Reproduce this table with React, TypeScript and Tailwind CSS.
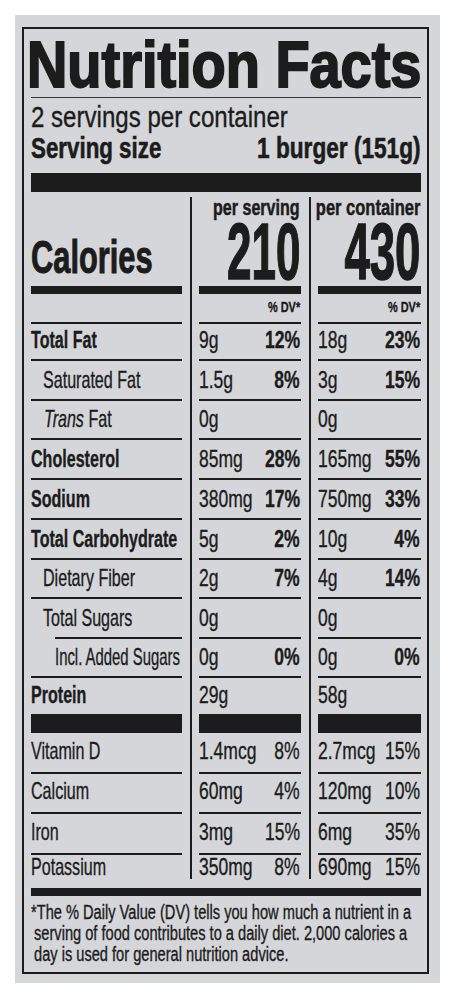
import type { ReactNode } from 'react'

const ink = 'bg-[#1c1c1c]'

// text squeezed sideways to get the condensed look of the label type
function L({ s, children }: { s: string; children: ReactNode }) {
  return <span className={`inline-block origin-left whitespace-nowrap ${s}`}>{children}</span>
}

function R({ s, children }: { s: string; children: ReactNode }) {
  return (
    <div className="ml-auto flex w-0 justify-end pr-[1px]">
      <span className={`inline-block shrink-0 origin-right whitespace-nowrap ${s}`}>{children}</span>
    </div>
  )
}

function Divider() {
  return (
    <div className="w-[17px] shrink-0 pl-[8px]">
      <div className={`h-full w-[2px] ${ink}`} />
    </div>
  )
}

type Nutrient = {
  label: ReactNode
  bold?: boolean
  indent?: string
  squeeze?: string
  h: string
  a: [string, string]
  b: [string, string]
  line?: boolean
}

const main: Nutrient[] = [
  { label: 'Total Fat', bold: true, h: 'h-[37px]', a: ['9g', '12%'], b: ['18g', '23%'] },
  { label: 'Saturated Fat', indent: 'pl-[12px]', h: 'h-[40px]', a: ['1.5g', '8%'], b: ['3g', '15%'] },
  {
    label: (
      <>
        <i>Trans</i> Fat
      </>
    ),
    indent: 'pl-[13px]',
    h: 'h-[39px]',
    a: ['0g', ''],
    b: ['0g', ''],
  },
  { label: 'Cholesterol', bold: true, h: 'h-[40px]', a: ['85mg', '28%'], b: ['165mg', '55%'] },
  { label: 'Sodium', bold: true, h: 'h-[40px]', a: ['380mg', '17%'], b: ['750mg', '33%'] },
  { label: 'Total Carbohydrate', bold: true, h: 'h-[40px]', a: ['5g', '2%'], b: ['10g', '4%'] },
  { label: 'Dietary Fiber', indent: 'pl-[12px]', h: 'h-[39px]', a: ['2g', '7%'], b: ['4g', '14%'] },
]

const minerals: Nutrient[] = [
  { label: 'Vitamin D', h: 'h-[41px]', a: ['1.4mcg', '8%'], b: ['2.7mcg', '15%'] },
  { label: 'Calcium', h: 'h-[40px]', a: ['60mg', '4%'], b: ['120mg', '10%'] },
  { label: 'Iron', h: 'h-[41px]', a: ['3mg', '15%'], b: ['6mg', '35%'] },
  { label: 'Potassium', h: 'h-[24px]', a: ['350mg', '8%'], b: ['690mg', '15%'], line: false },
]

function Amount({ v, boldPct }: { v: [string, string]; boldPct: boolean }) {
  return (
    <>
      <L s="scale-x-[0.73]">{v[0]}</L>
      {v[1] && (
        <div className={boldPct ? 'ml-auto font-bold' : 'ml-auto'}>
          <R s="scale-x-[0.73]">{v[1]}</R>
        </div>
      )}
    </>
  )
}

function Row({ n, pad, boldPct }: { n: Nutrient; pad: string; boldPct: boolean }) {
  const line = n.line === false ? '' : 'border-b-2 border-[#1c1c1c]'
  return (
    <div className={`flex text-[24px] leading-none ${n.h}`}>
      <div className={`flex w-[151px] items-end ${pad} ${line} ${n.indent ?? ''} ${n.bold ? 'font-bold' : ''}`}>
        <L s={n.squeeze ?? 'scale-x-[0.67]'}>{n.label}</L>
      </div>
      <Divider />
      <div className={`flex w-[102px] items-end ${pad} ${line}`}>
        <Amount v={n.a} boldPct={boldPct} />
      </div>
      <Divider />
      <div className={`flex flex-1 items-end ${pad} ${line}`}>
        <Amount v={n.b} boldPct={boldPct} />
      </div>
    </div>
  )
}

export default function App() {
  return (
    <div className="h-[998px] w-[455px] overflow-hidden bg-white pt-[15px] pl-[15px] font-['Liberation_Sans',Arial,sans-serif] text-[#1c1c1c] [-webkit-text-stroke:0.35px_#1c1c1c]">
      <div className="h-[968px] w-[425px] bg-[#d4d6d9] pt-[12px] pl-[7px]">
        <div className="box-border h-[947px] w-[407px] overflow-hidden border-2 border-[#1c1c1c] pr-[6px] pl-[7px]">
          {/* title */}
          <div className="-ml-[4px] pt-[3px] text-[65px] leading-none font-bold [-webkit-text-stroke:2px_#1c1c1c]">
            <L s="scale-x-[0.86]">Nutrition Facts</L>
          </div>
          <div className="h-px bg-[#333]" />

          <div className="mt-[4px] text-[29px] leading-[31px]">
            <L s="scale-x-[0.83]">2 servings per container</L>
          </div>
          <div className="flex text-[29px] leading-[31px] font-bold [-webkit-text-stroke:0.6px_#1c1c1c]">
            <L s="scale-x-[0.77]">Serving size</L>
            <R s="scale-x-[0.78]">1 burger (151g)</R>
          </div>

          <div className={`mt-[9px] h-[19px] ${ink}`} />

          {/* calories */}
          <div className="mt-[5px] flex font-bold">
            <div className="flex w-[151px] flex-col justify-end">
              <div className="text-[46px] leading-none [-webkit-text-stroke:1px_#1c1c1c]">
                <L s="scale-x-[0.67]">Calories</L>
              </div>
              <div className={`mt-[6px] h-[8px] ${ink}`} />
            </div>
            <Divider />
            <div className="flex w-[102px] flex-col">
              <div className="flex text-[22px] leading-[22px] [-webkit-text-stroke:0.5px_#1c1c1c]">
                <R s="scale-x-[0.73]">per serving</R>
              </div>
              <div className="mt-[1px] flex text-[80px] leading-[64px] [-webkit-text-stroke:1.5px_#1c1c1c]">
                <R s="scale-x-[0.55]">210</R>
              </div>
              <div className={`mt-[2px] h-[8px] ${ink}`} />
            </div>
            <Divider />
            <div className="flex flex-1 flex-col">
              <div className="flex text-[22px] leading-[22px] [-webkit-text-stroke:0.5px_#1c1c1c]">
                <R s="scale-x-[0.75]">per container</R>
              </div>
              <div className="mt-[1px] flex text-[80px] leading-[64px] [-webkit-text-stroke:1.5px_#1c1c1c]">
                <R s="scale-x-[0.57]">430</R>
              </div>
              <div className={`mt-[2px] h-[8px] ${ink}`} />
            </div>
          </div>

          {/* % DV */}
          <div className="flex h-[30px] text-[15px] leading-none font-bold">
            <div className="w-[151px] border-b-2 border-[#1c1c1c]" />
            <Divider />
            <div className="flex w-[102px] items-end border-b-2 border-[#1c1c1c] pb-[8px]">
              <R s="scale-x-[0.73]">% DV*</R>
            </div>
            <Divider />
            <div className="flex flex-1 items-end border-b-2 border-[#1c1c1c] pb-[8px]">
              <R s="scale-x-[0.73]">% DV*</R>
            </div>
          </div>

          {main.map((n, i) => (
            <Row key={i} n={n} pad="pb-[7px]" boldPct />
          ))}

          {/* sugars */}
          <div className="flex h-[40px] text-[24px] leading-none">
            <div className="ml-[24px] flex w-[127px] items-end border-b-2 border-[#1c1c1c] pb-[7px]">
              <div className="-ml-[12px]">
                <L s="scale-x-[0.67]">Total Sugars</L>
              </div>
            </div>
            <Divider />
            <div className="flex w-[102px] items-end border-b-2 border-[#1c1c1c] pb-[7px]">
              <L s="scale-x-[0.73]">0g</L>
            </div>
            <Divider />
            <div className="flex flex-1 items-end border-b-2 border-[#1c1c1c] pb-[7px]">
              <L s="scale-x-[0.73]">0g</L>
            </div>
          </div>
          <Row
            n={{ label: 'Incl. Added Sugars', indent: 'pl-[24px]', squeeze: 'scale-x-[0.62]', h: 'h-[39px]', a: ['0g', '0%'], b: ['0g', '0%'] }}
            pad="pb-[7px]"
            boldPct
          />
          <Row n={{ label: 'Protein', bold: true, h: 'h-[36px]', a: ['29g', ''], b: ['58g', ''], line: false }} pad="pb-[7px]" boldPct />

          <div className="flex h-[19px]">
            <div className={`w-[151px] ${ink}`} />
            <Divider />
            <div className={`w-[102px] ${ink}`} />
            <Divider />
            <div className={`flex-1 ${ink}`} />
          </div>

          {minerals.map((n, i) => (
            <Row key={i} n={n} pad={n.line === false ? 'pb-0' : 'pb-[9px]'} boldPct={false} />
          ))}

          <div className={`mt-[9px] h-[8px] ${ink}`} />

          {/* footnote */}
          <div className="mt-[6px] text-[19.5px] leading-[21px]">
            <div>
              <L s="scale-x-[0.75]">*The % Daily Value (DV) tells you how much a nutrient in a</L>
            </div>
            <div className="pl-[3px]">
              <L s="scale-x-[0.75]">serving of food contributes to a daily diet. 2,000 calories a</L>
            </div>
            <div className="pl-[3px]">
              <L s="scale-x-[0.75]">day is used for general nutrition advice.</L>
            </div>
          </div>
        </div>
      </div>
    </div>
  )
}
